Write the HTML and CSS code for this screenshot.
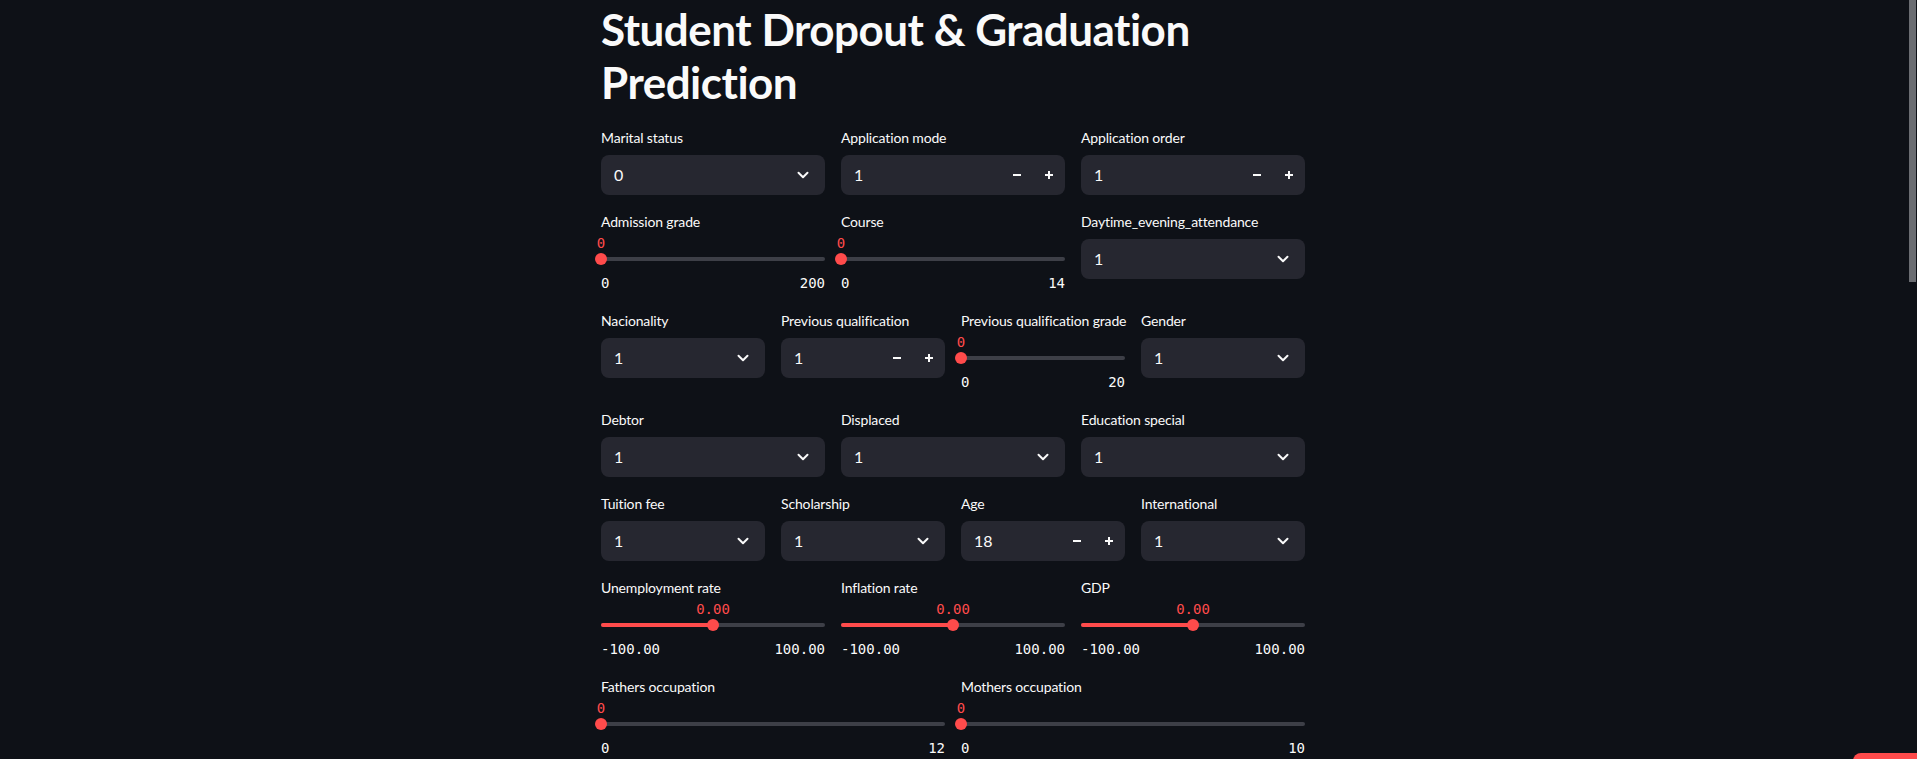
FILE: index.html
```html
<!DOCTYPE html>
<html lang="en">
<head>
<meta charset="utf-8">
<title>Student Dropout &amp; Graduation Prediction</title>
<link rel="stylesheet" href="styles.css">
</head>
<body>
<div class="main">
  <div class="block">
    <h1 class="title">Student Dropout &amp; Graduation Prediction</h1>

    <div class="row cols3">
      <div class="field">
        <div class="label">Marital status</div>
        <div class="select"><span>0</span><svg class="chev" viewBox="0 0 12 8"><path d="M1.5 1.8 6 6.2 10.5 1.8"/></svg></div>
      </div>
      <div class="field">
        <div class="label">Application mode</div>
        <div class="number"><span class="num-val">1</span><span class="step"><svg viewBox="0 0 10 10"><path d="M1 5h8"/></svg></span><span class="step"><svg viewBox="0 0 10 10"><path d="M1 5h8M5 1v8"/></svg></span></div>
      </div>
      <div class="field">
        <div class="label">Application order</div>
        <div class="number"><span class="num-val">1</span><span class="step"><svg viewBox="0 0 10 10"><path d="M1 5h8"/></svg></span><span class="step"><svg viewBox="0 0 10 10"><path d="M1 5h8M5 1v8"/></svg></span></div>
      </div>
    </div>

    <div class="row cols3">
      <div class="field">
        <div class="label">Admission grade</div>
        <div class="slider">
          <div class="val-row"><span class="thumb-val" style="left:0%">0</span></div>
          <div class="track-area"><div class="track"><div class="fill" style="width:0%"></div><span class="thumb" style="left:0%"></span></div></div>
          <div class="ticks"><span>0</span><span>200</span></div>
        </div>
      </div>
      <div class="field">
        <div class="label">Course</div>
        <div class="slider">
          <div class="val-row"><span class="thumb-val" style="left:0%">0</span></div>
          <div class="track-area"><div class="track"><div class="fill" style="width:0%"></div><span class="thumb" style="left:0%"></span></div></div>
          <div class="ticks"><span>0</span><span>14</span></div>
        </div>
      </div>
      <div class="field">
        <div class="label">Daytime_evening_attendance</div>
        <div class="select"><span>1</span><svg class="chev" viewBox="0 0 12 8"><path d="M1.5 1.8 6 6.2 10.5 1.8"/></svg></div>
      </div>
    </div>

    <div class="row cols4">
      <div class="field">
        <div class="label">Nacionality</div>
        <div class="select"><span>1</span><svg class="chev" viewBox="0 0 12 8"><path d="M1.5 1.8 6 6.2 10.5 1.8"/></svg></div>
      </div>
      <div class="field">
        <div class="label">Previous qualification</div>
        <div class="number"><span class="num-val">1</span><span class="step"><svg viewBox="0 0 10 10"><path d="M1 5h8"/></svg></span><span class="step"><svg viewBox="0 0 10 10"><path d="M1 5h8M5 1v8"/></svg></span></div>
      </div>
      <div class="field">
        <div class="label">Previous qualification grade</div>
        <div class="slider">
          <div class="val-row"><span class="thumb-val" style="left:0%">0</span></div>
          <div class="track-area"><div class="track"><div class="fill" style="width:0%"></div><span class="thumb" style="left:0%"></span></div></div>
          <div class="ticks"><span>0</span><span>20</span></div>
        </div>
      </div>
      <div class="field">
        <div class="label">Gender</div>
        <div class="select"><span>1</span><svg class="chev" viewBox="0 0 12 8"><path d="M1.5 1.8 6 6.2 10.5 1.8"/></svg></div>
      </div>
    </div>

    <div class="row cols3">
      <div class="field">
        <div class="label">Debtor</div>
        <div class="select"><span>1</span><svg class="chev" viewBox="0 0 12 8"><path d="M1.5 1.8 6 6.2 10.5 1.8"/></svg></div>
      </div>
      <div class="field">
        <div class="label">Displaced</div>
        <div class="select"><span>1</span><svg class="chev" viewBox="0 0 12 8"><path d="M1.5 1.8 6 6.2 10.5 1.8"/></svg></div>
      </div>
      <div class="field">
        <div class="label">Education special</div>
        <div class="select"><span>1</span><svg class="chev" viewBox="0 0 12 8"><path d="M1.5 1.8 6 6.2 10.5 1.8"/></svg></div>
      </div>
    </div>

    <div class="row cols4">
      <div class="field">
        <div class="label">Tuition fee</div>
        <div class="select"><span>1</span><svg class="chev" viewBox="0 0 12 8"><path d="M1.5 1.8 6 6.2 10.5 1.8"/></svg></div>
      </div>
      <div class="field">
        <div class="label">Scholarship</div>
        <div class="select"><span>1</span><svg class="chev" viewBox="0 0 12 8"><path d="M1.5 1.8 6 6.2 10.5 1.8"/></svg></div>
      </div>
      <div class="field">
        <div class="label">Age</div>
        <div class="number"><span class="num-val">18</span><span class="step"><svg viewBox="0 0 10 10"><path d="M1 5h8"/></svg></span><span class="step"><svg viewBox="0 0 10 10"><path d="M1 5h8M5 1v8"/></svg></span></div>
      </div>
      <div class="field">
        <div class="label">International</div>
        <div class="select"><span>1</span><svg class="chev" viewBox="0 0 12 8"><path d="M1.5 1.8 6 6.2 10.5 1.8"/></svg></div>
      </div>
    </div>

    <div class="row cols3">
      <div class="field">
        <div class="label">Unemployment rate</div>
        <div class="slider">
          <div class="val-row"><span class="thumb-val" style="left:50%">0.00</span></div>
          <div class="track-area"><div class="track"><div class="fill" style="width:50%"></div><span class="thumb" style="left:50%"></span></div></div>
          <div class="ticks"><span>-100.00</span><span>100.00</span></div>
        </div>
      </div>
      <div class="field">
        <div class="label">Inflation rate</div>
        <div class="slider">
          <div class="val-row"><span class="thumb-val" style="left:50%">0.00</span></div>
          <div class="track-area"><div class="track"><div class="fill" style="width:50%"></div><span class="thumb" style="left:50%"></span></div></div>
          <div class="ticks"><span>-100.00</span><span>100.00</span></div>
        </div>
      </div>
      <div class="field">
        <div class="label">GDP</div>
        <div class="slider">
          <div class="val-row"><span class="thumb-val" style="left:50%">0.00</span></div>
          <div class="track-area"><div class="track"><div class="fill" style="width:50%"></div><span class="thumb" style="left:50%"></span></div></div>
          <div class="ticks"><span>-100.00</span><span>100.00</span></div>
        </div>
      </div>
    </div>

    <div class="row cols2">
      <div class="field">
        <div class="label">Fathers occupation</div>
        <div class="slider">
          <div class="val-row"><span class="thumb-val" style="left:0%">0</span></div>
          <div class="track-area"><div class="track"><div class="fill" style="width:0%"></div><span class="thumb" style="left:0%"></span></div></div>
          <div class="ticks"><span>0</span><span>12</span></div>
        </div>
      </div>
      <div class="field">
        <div class="label">Mothers occupation</div>
        <div class="slider">
          <div class="val-row"><span class="thumb-val" style="left:0%">0</span></div>
          <div class="track-area"><div class="track"><div class="fill" style="width:0%"></div><span class="thumb" style="left:0%"></span></div></div>
          <div class="ticks"><span>0</span><span>10</span></div>
        </div>
      </div>
    </div>
  </div>
</div>
<div class="scroll-thumb"></div>
<div class="manage-btn"></div>
</body>
</html>
```

FILE: styles.css
```css
html, body {
  margin: 0;
  padding: 0;
  height: 100%;
  overflow: hidden;
  background: #0e1117;
}

body {
  font-family: "Lato", "Noto Sans", sans-serif;
  color: #fafafa;
}

.main {
  width: 1906px;
}

.block {
  width: 704px;
  margin: 0 auto;
  display: flex;
  flex-direction: column;
  gap: 16px;
}

.title {
  margin: 0;
  padding: 3px 0 2px;
  font-family: "Lato", sans-serif;
  font-weight: 700;
  font-size: 44px;
  line-height: 52.8px;
  letter-spacing: -0.5px;
  color: #fafafa;
}

.row {
  display: grid;
  gap: 16px;
  align-items: start;
}
.cols2 { grid-template-columns: repeat(2, 1fr); }
.cols3 { grid-template-columns: repeat(3, 1fr); }
.cols4 { grid-template-columns: repeat(4, 1fr); }

.field {
  display: flex;
  flex-direction: column;
  min-width: 0;
}

.label {
  height: 24px;
  line-height: 21px;
  font-size: 14px;
  letter-spacing: -0.15px;
  margin-bottom: 4px;
  white-space: nowrap;
}

.field:has(.slider) .label {
  margin-bottom: 0;
}

.select, .number {
  height: 40px;
  background: #262730;
  border-radius: 8px;
  display: flex;
  align-items: center;
  font-size: 16px;
  box-sizing: border-box;
}

.select {
  justify-content: space-between;
  padding: 0 16px 0 13px;
}

.chev {
  width: 12px;
  height: 8px;
  fill: none;
  stroke: #fafafa;
  stroke-width: 2;
  stroke-linecap: round;
  stroke-linejoin: round;
}

.number .num-val {
  flex: 1;
  padding-left: 13px;
}

.step {
  width: 32px;
  height: 100%;
  display: flex;
  align-items: center;
  justify-content: center;
}
.step svg {
  width: 10px;
  height: 10px;
  fill: none;
  stroke: #fafafa;
  stroke-width: 2;
}

.slider {
  display: flex;
  flex-direction: column;
  padding-bottom: 1px;
  font-family: "DejaVu Sans Mono", "Liberation Mono", monospace;
  font-size: 14px;
}

.val-row {
  height: 16px;
  position: relative;
}

.thumb-val {
  position: absolute;
  top: -2px;
  line-height: 20px;
  transform: translateX(-50%);
  color: #ff4b4b;
  white-space: nowrap;
}

.track-area {
  height: 16px;
  display: flex;
  align-items: center;
}

.track {
  position: relative;
  width: 100%;
  height: 4px;
  border-radius: 2px;
  background: #3d3f47;
}

.fill {
  height: 100%;
  border-radius: 2px;
  background: #ff4b4b;
}

.thumb {
  position: absolute;
  top: 50%;
  width: 12px;
  height: 12px;
  border-radius: 50%;
  background: #ff4b4b;
  transform: translate(-50%, -50%);
}

.ticks {
  margin-top: 6px;
  line-height: 20px;
  display: flex;
  justify-content: space-between;
  color: #fafafa;
}

.scroll-thumb {
  position: fixed;
  top: 0;
  right: 1px;
  width: 7px;
  height: 282px;
  background: #6b6d72;
}

.manage-btn {
  position: fixed;
  left: 1853px;
  top: 753px;
  width: 80px;
  height: 30px;
  border-radius: 8px 0 0 0;
  background: #ff4b4b;
}
```
